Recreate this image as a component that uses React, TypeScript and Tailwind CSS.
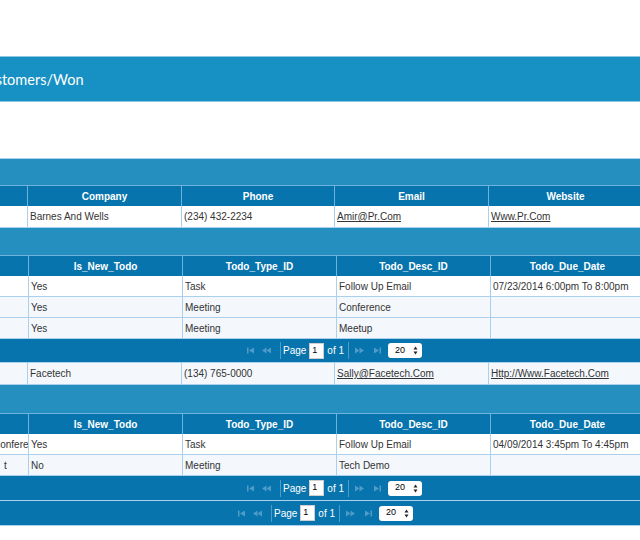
import React from 'react';

const cell = 'h-full border-r border-b border-[#a9d0ec] px-[2px] flex items-center overflow-hidden whitespace-nowrap';
const headCell = 'h-full border-r border-[#6fb3dc] flex items-center justify-center font-bold text-white overflow-hidden whitespace-nowrap';

const outerCols = 'grid grid-cols-[28px_154px_153px_154px_154px_154px]';
const subCols = 'grid grid-cols-[29px_154px_154px_154px_154px_154px]';

type Contact = { company: string; phone: string; email: string; site: string };
type Todo = { lead: React.ReactNode; isNew: string; type: string; desc: string; due: string };

const SeekFirst = () => (
  <svg width="10" height="7" viewBox="0 0 10 7" className="fill-[#4f9cc9]">
    <rect x="1" y="0.5" width="1.5" height="6" />
    <path d="M3 3.5 L8 0.5 L8 6.5 Z" />
  </svg>
);

const SeekPrev = () => (
  <svg width="11" height="7" viewBox="0 0 11 7" className="fill-[#4f9cc9]">
    <path d="M1 3.5 L5.5 0.5 L5.5 6.5 Z" />
    <path d="M5.5 3.5 L10 0.5 L10 6.5 Z" />
  </svg>
);

const SeekNext = () => (
  <svg width="11" height="7" viewBox="0 0 11 7" className="fill-[#4f9cc9]">
    <path d="M1 0.5 L5.5 3.5 L1 6.5 Z" />
    <path d="M5.5 0.5 L10 3.5 L5.5 6.5 Z" />
  </svg>
);

const SeekEnd = () => (
  <svg width="10" height="7" viewBox="0 0 10 7" className="fill-[#4f9cc9]">
    <path d="M2 0.5 L7 3.5 L2 6.5 Z" />
    <rect x="7.5" y="0.5" width="1.5" height="6" />
  </svg>
);

function Pager({ offset, height }: { offset: string; height: string }) {
  return (
    <div className={`${height} bg-[#0774ad] border-b border-[#a9d0ec] flex items-center text-white text-[10px]`}>
      <div className={`flex items-center ${offset}`}>
        <div className="flex items-center gap-[5px] w-[34px]">
          <SeekFirst />
          <SeekPrev />
        </div>
        <div className="w-px h-[17px] bg-[#4d9dcb] mr-[2px]" />
        <span>Page</span>
        <div className="ml-[3px] w-[15px] h-[16px] bg-white text-black text-[9px] flex items-center pl-[2px] border border-[#cfcfcf]">1</div>
        <span className="ml-[3px]">of 1</span>
        <div className="w-px h-[17px] bg-[#4d9dcb] ml-[4px] mr-[5px]" />
        <div className="flex items-center gap-[7px] w-[33px]">
          <SeekNext />
          <SeekEnd />
        </div>
        <div className="ml-[1px] w-[34px] h-[15px] bg-white rounded-[3px] flex items-center justify-between pl-[7px] pr-[4px] text-black text-[9px]">
          <span>20</span>
          <svg width="5" height="9" viewBox="0 0 5 9" className="fill-[#222]">
            <path d="M0.5 3.5 L2.5 0.5 L4.5 3.5 Z" />
            <path d="M0.5 5.5 L2.5 8.5 L4.5 5.5 Z" />
          </svg>
        </div>
      </div>
    </div>
  );
}

function OuterRow({ c, bg }: { c: Contact; bg: string }) {
  return (
    <div className={`${outerCols} h-[22px] ${bg}`}>
      <div className={cell} />
      <div className={cell}>{c.company}</div>
      <div className={cell}>{c.phone}</div>
      <div className={cell}><span className="underline">{c.email}</span></div>
      <div className={cell}><span className="underline">{c.site}</span></div>
      <div className={cell} />
    </div>
  );
}

function SubGrid({ todos, bandHeight, pagerHeight }: { todos: Todo[]; bandHeight: string; pagerHeight: string }) {
  return (
    <div>
      <div className={`${bandHeight} bg-[#2590c0]`} />
      <div className={`${subCols} h-[21px] bg-[#0774ad] border-t border-[#6fb3dc]`}>
        <div className={headCell} />
        <div className={headCell}>Is_New_Todo</div>
        <div className={headCell}>Todo_Type_ID</div>
        <div className={headCell}>Todo_Desc_ID</div>
        <div className={headCell}>Todo_Due_Date</div>
        <div className={headCell} />
      </div>
      {todos.map((t, i) => (
        <div key={i} className={`${subCols} h-[21px] ${i === 0 ? 'bg-white' : 'bg-[#f4f8fc]'}`}>
          <div className={cell}>{t.lead}</div>
          <div className={cell}>{t.isNew}</div>
          <div className={cell}>{t.type}</div>
          <div className={cell}>{t.desc}</div>
          <div className={cell}>{t.due}</div>
          <div className={cell} />
        </div>
      ))}
      <Pager offset="pl-[246px]" height={pagerHeight} />
    </div>
  );
}

export default function App() {
  const barnes: Contact = { company: 'Barnes And Wells', phone: '(234) 432-2234', email: 'Amir@Pr.Com', site: 'Www.Pr.Com' };
  const facetech: Contact = { company: 'Facetech', phone: '(134) 765-0000', email: 'Sally@Facetech.Com', site: 'Http://Www.Facetech.Com' };

  const barnesTodos: Todo[] = [
    { lead: null, isNew: 'Yes', type: 'Task', desc: 'Follow Up Email', due: '07/23/2014 6:00pm To 8:00pm' },
    { lead: null, isNew: 'Yes', type: 'Meeting', desc: 'Conference', due: '' },
    { lead: null, isNew: 'Yes', type: 'Meeting', desc: 'Meetup', due: '' },
  ];
  const facetechTodos: Todo[] = [
    { lead: <span className="-ml-[9px]">Conference</span>, isNew: 'Yes', type: 'Task', desc: 'Follow Up Email', due: '04/09/2014 3:45pm To 4:45pm' },
    { lead: <span className="ml-[2px]">t</span>, isNew: 'No', type: 'Meeting', desc: 'Tech Demo', due: '' },
  ];

  return (
    <div className="w-[640px] h-[540px] overflow-hidden bg-white text-[#333] text-[10px] font-['Liberation_Sans',Arial,sans-serif]">
      <div className="h-[56px]" />
      <div className="h-[46px] bg-[#1790c3] border-y border-[#8ec7e4] flex items-center overflow-hidden">
        <span className="-ml-[22px] mt-[1px] text-[14.5px] text-white font-['Lato',sans-serif] whitespace-nowrap">Customers/Won</span>
      </div>
      <div className="h-[56px]" />

      <div className="border-t border-[#a9d0ec]">
        <div className="h-[26px] bg-[#2590c0]" />
        <div className={`${outerCols} h-[21px] bg-[#0774ad] border-t border-[#6fb3dc]`}>
          <div className={headCell} />
          <div className={headCell}>Company</div>
          <div className={headCell}>Phone</div>
          <div className={headCell}>Email</div>
          <div className={headCell}>Website</div>
          <div className={headCell} />
        </div>
        <OuterRow c={barnes} bg="bg-white" />
        <SubGrid todos={barnesTodos} bandHeight="h-[27px]" pagerHeight="h-[24px]" />
        <OuterRow c={facetech} bg="bg-[#f4f8fc]" />
        <SubGrid todos={facetechTodos} bandHeight="h-[28px]" pagerHeight="h-[25px]" />
        <Pager offset="pl-[237px]" height="h-[25px]" />
      </div>
    </div>
  );
}
